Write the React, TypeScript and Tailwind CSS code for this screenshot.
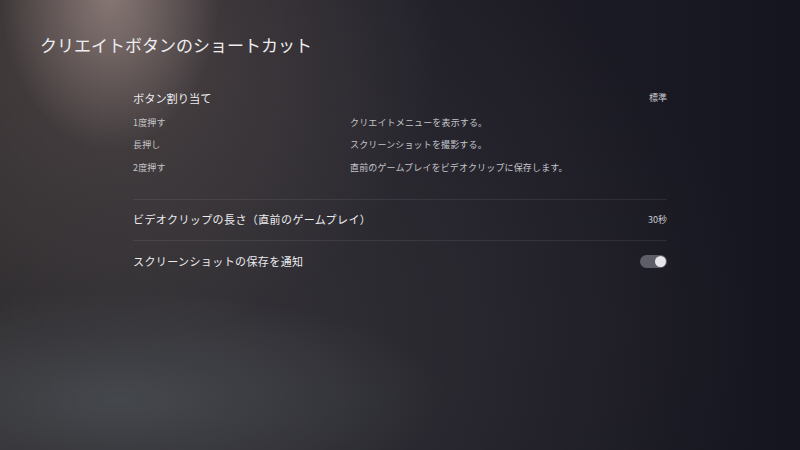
const rows = [
  { key: "1度押す", value: "クリエイトメニューを表示する。" },
  { key: "長押し", value: "スクリーンショットを撮影する。" },
  { key: "2度押す", value: "直前のゲームプレイをビデオクリップに保存します。" },
];

function Toggle() {
  return (
    <div className="flex h-[13px] w-[27px] items-center justify-end rounded-full bg-[#5e5e68] pr-[1px]">
      <div className="h-[11px] w-[11px] rounded-full bg-[#e6e6ea]" />
    </div>
  );
}

export default function App() {
  return (
    <div
      className="relative h-[450px] w-[800px] overflow-hidden bg-[#161622] text-[#e9e9ec] bg-[radial-gradient(ellipse_110px_160px_at_110px_-10px,rgba(165,145,140,0.7),transparent),radial-gradient(ellipse_320px_300px_at_120px_40px,rgba(110,95,92,0.45),transparent),radial-gradient(ellipse_330px_110px_at_120px_400px,rgba(85,92,98,0.55),transparent),radial-gradient(ellipse_560px_420px_at_200px_330px,rgba(60,58,62,0.6),transparent),linear-gradient(90deg,#2a2729_0%,#22212a_45%,#15151f_100%)]"
      style={{ fontFamily: '"Noto Sans CJK JP", "Noto Sans", sans-serif' }}
    >
      <div className="pl-[40px] pt-[33px] text-[17px] leading-[24px] text-[#ededf0]">
        クリエイトボタンのショートカット
      </div>

      <div className="mx-[133px] mt-[33px]">
        <div className="flex h-[16px] items-center justify-between">
          <span className="text-[11.2px] text-[#ececef]">ボタン割り当て</span>
          <span className="text-[9px] text-[#c9c9ce]">標準</span>
        </div>
        <div className="mb-[20px] mt-[5px] flex flex-col">
          {rows.map((r) => (
            <div key={r.key} className="flex h-[22.5px] items-center text-[9px] tracking-[0.15px] text-[#c4c4c9]">
              <span className="w-[217px]">{r.key}</span>
              <span>{r.value}</span>
            </div>
          ))}
        </div>

        <div className="h-px bg-white/[0.08]" />
        <div className="flex h-[40px] items-center justify-between">
          <span className="text-[11px] tracking-[0.4px] text-[#ececef]">ビデオクリップの長さ（直前のゲームプレイ）</span>
          <span className="text-[9px] text-[#c9c9ce]">30秒</span>
        </div>
        <div className="h-px bg-white/[0.08]" />
        <div className="flex h-[41px] items-center justify-between">
          <span className="text-[11px] tracking-[0.4px] text-[#ececef]">スクリーンショットの保存を通知</span>
          <Toggle />
        </div>
      </div>
    </div>
  );
}
